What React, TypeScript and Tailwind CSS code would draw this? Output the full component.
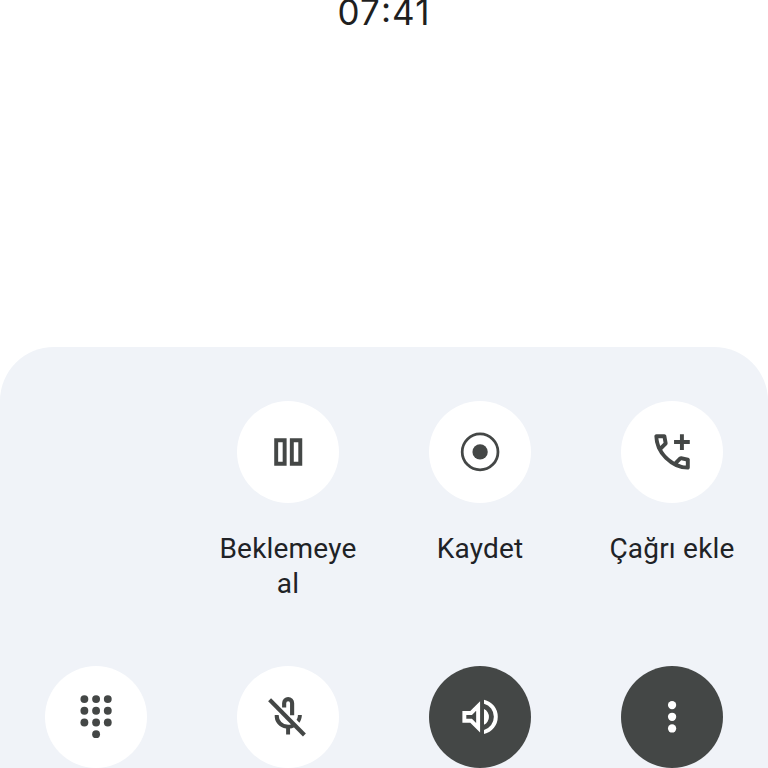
import type { ReactNode } from "react";

const ink = "#444746";

function Icon({ children }: { children: ReactNode }) {
  return (
    <svg viewBox="-0.25 -0.15 24 24" className="size-[47.2px]" fill="currentColor" stroke="none">
      {children}
    </svg>
  );
}

const PauseIcon = () => (
  <Icon>
    <path fillRule="evenodd" d="M4.95 5.1h6.3v13.9h-6.3zM6.95 7.1v9.9h2.3V7.1zM12.9 5.1h6.3v13.9h-6.3zM14.9 7.1v9.9h2.3V7.1z" />
  </Icon>
);

const RecordIcon = () => (
  <Icon>
    <circle cx="12" cy="12" r="9.1" fill="none" stroke="currentColor" strokeWidth="1.4" />
    <circle cx="12" cy="12" r="3.9" />
  </Icon>
);

const AddCallIcon = () => (
  <Icon>
    <path d="M19.95 21q-3.125 0-6.175-1.362t-5.55-3.863-3.862-5.55T3 4.05q0-.45.3-.75t.75-.3H8.1q.35 0 .625.238t.325.562l.65 3.5q.05.4-.025.675T9.4 8.45L6.975 10.9q.5.925 1.187 1.787t1.513 1.663q.775.775 1.625 1.438T13.1 17l2.35-2.35q.225-.225.588-.337t.712-.063l3.45.7q.35.1.575.363T21 15.9v4.05q0 .45-.3.75t-.75.3M6.025 9l1.65-1.65L7.25 5H5.025q.125 1.025.35 2.025T6.025 9m8.95 8.95q.975.425 1.988.675T19 18.95v-2.2l-2.35-.475z" />
    <path d="M16 11V8h-3V6h3V3h2v3h3v2h-3v3z" />
  </Icon>
);

const DialpadIcon = () => (
  <Icon>
    {[2.95, 8.9, 14.85].map((y) =>
      [6.05, 12, 17.95].map((x) => <circle key={`${x}-${y}`} cx={x} cy={y} r="2" />),
    )}
    <circle cx="12" cy="20.8" r="2" />
  </Icon>
);

const MicOffIcon = () => (
  <Icon>
    <path d="M10 7.2V5a2 2 0 0 1 4.05 0v6.2" fill="none" stroke="currentColor" strokeWidth="2.1" />
    <path d="M17.75 14.95L16.3 13.5q.35-.575.525-1.212T17 11h2q0 1.1-.325 2.088t-.925 1.862" />
    <path d="M11 21v-3.1q-2.6-.35-4.3-2.312T5.2 11h2q0 2.075 1.363 3.538T12 16q.85 0 1.613-.262T15 15l1.425 1.425q-.725.575-1.588.962T13 17.9V21z" />
    <path d="M2.6 3.3l17.7 17.9" fill="none" stroke="currentColor" strokeWidth="2.1" />
  </Icon>
);

const SpeakerIcon = () => (
  <Icon>
    <path d="M14 20.725v-2.05q2.25-.65 3.625-2.5T19 11.975t-1.375-4.2T14 5.275v-2.05q3.1.7 5.05 3.138T21 11.975t-1.95 5.612T14 20.725M14 16V7.95q1.175.55 1.838 1.65T16.5 12q0 1.275-.663 2.363T14 16M3 15V9h4l5-5v16l-5-5zm7-6.15L7.85 11H5v2h2.85L10 15.15z" />
  </Icon>
);

const MoreIcon = () => (
  <Icon>
    <circle cx="12" cy="6" r="2.1" />
    <circle cx="12" cy="11.95" r="2.1" />
    <circle cx="12" cy="17.9" r="2.1" />
  </Icon>
);

function Action({ children, label, active }: { children: ReactNode; label?: ReactNode; active?: boolean }) {
  return (
    <div className="flex flex-col items-center">
      <button
        style={{ color: active ? "#ffffff" : ink }}
        className={`flex size-[102px] shrink-0 items-center justify-center rounded-full ${active ? "bg-[#444746]" : "bg-white"}`}
      >
        {children}
      </button>
      {label && (
        <div className="mt-[28px] text-center text-[28px] leading-[35px] tracking-[0.2px] whitespace-nowrap text-[#202226]">{label}</div>
      )}
    </div>
  );
}

export default function App() {
  return (
    <div className="flex h-[768px] w-[768px] flex-col overflow-hidden bg-white font-['Roboto',sans-serif]">
      <header className="flex h-[347px] shrink-0 justify-center">
        <time className="h-[25px] font-['Inter',sans-serif] text-[35px] leading-[24px] tracking-[1.1px] text-[#1f1f1f]">
          07<span className="inline-block -translate-y-[3px]">:</span>41
        </time>
      </header>
      <main className="grid flex-1 grid-cols-4 grid-rows-[265px_102px] rounded-t-[54px] bg-[#f0f3f8] pt-[54px]">
        <div />
        <Action label={<>Beklemeye<br />al</>}><PauseIcon /></Action>
        <Action label="Kaydet"><RecordIcon /></Action>
        <Action label="Çağrı ekle"><AddCallIcon /></Action>
        <Action><DialpadIcon /></Action>
        <Action><MicOffIcon /></Action>
        <Action active><SpeakerIcon /></Action>
        <Action active><MoreIcon /></Action>
      </main>
    </div>
  );
}
